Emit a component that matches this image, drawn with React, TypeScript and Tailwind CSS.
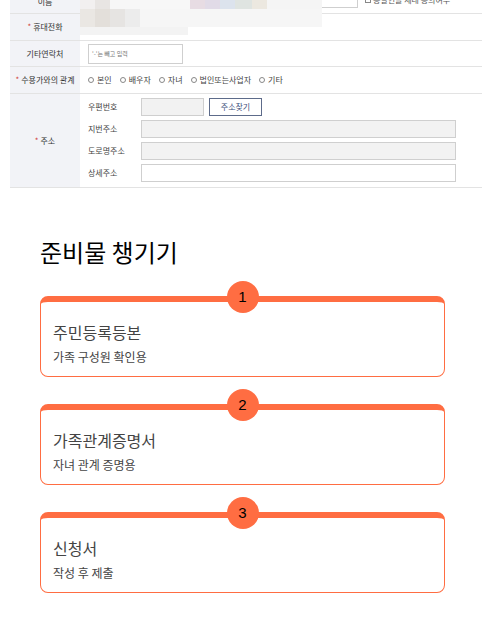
import React from 'react';

const mosaic: { top: number; h: number; cells: [number, number, string][] }[] = [
  {
    top: 0,
    h: 9,
    cells: [
      [80, 15, '#f2f0f0'], [95, 15, '#e8e5e3'], [110, 80, '#f7f7f7'], [190, 15, '#e7dce3'],
      [205, 15, '#e1dbe7'], [220, 15, '#dce3ed'], [235, 17, '#dfe4e1'], [252, 15, '#ece8e0'],
      [267, 55, '#f5f5f5'],
    ],
  },
  {
    top: 9,
    h: 18,
    cells: [
      [80, 15, '#eae7e3'], [95, 15, '#e3dfda'], [110, 15, '#e6e4e2'], [125, 15, '#ececec'],
      [140, 182, '#f6f6f6'],
    ],
  },
  { top: 27, h: 8, cells: [[80, 108, '#f3f3f3']] },
];

const Label = ({ req, children }: { req?: boolean; children: React.ReactNode }) => (
  <div className="w-[70px] shrink-0 self-stretch flex items-center justify-center bg-[#f2f3f7] text-[#333]">
    {req && <span className="text-[#d04040] mr-[2px]">*</span>}
    {children}
  </div>
);

const Radio = ({ label }: { label: string }) => (
  <span className="flex items-center gap-[3px]">
    <span className="w-[6px] h-[6px] rounded-full border border-[#888]" />
    {label}
  </span>
);

const steps = [
  { n: 1, title: '주민등록등본', desc: '가족 구성원 확인용' },
  { n: 2, title: '가족관계증명서', desc: '자녀 관계 증명용' },
  { n: 3, title: '신청서', desc: '작성 후 제출' },
];

export default function App() {
  return (
    <div className="w-[482px] h-[630px] overflow-hidden bg-white font-['Noto_Sans_CJK_KR','Noto_Sans',sans-serif]">
      <div className="relative ml-[10px] text-[8px] leading-none text-[#333]">
        {/* name row, scrolled partly out of view */}
        <div className="h-[14px] flex border-b border-[#e3e3e3] overflow-hidden">
          <Label>
            <span className="-mt-[10px]">이름</span>
          </Label>
          <div className="flex-1 flex items-end pb-[5px] pl-[8px]">
            <div className="ml-[200px] w-[70px] h-[16px] border border-[#cfcfcf] bg-white" />
            <span className="ml-[7px] mb-[4px] flex items-center gap-[2px] text-[#555]">
              <span className="w-[6px] h-[6px] border border-[#888]" />
              동일인을 세대 동의여부
            </span>
          </div>
        </div>
        <div className="h-[27px] flex border-b border-[#e3e3e3]">
          <Label req>휴대전화</Label>
          <div className="flex-1" />
        </div>
        <div className="h-[26px] flex border-b border-[#e3e3e3]">
          <Label>기타연락처</Label>
          <div className="flex-1 flex items-center pl-[8px]">
            <div className="w-[95px] h-[20px] border border-[#cfcfcf] flex items-center px-[3px] text-[6px] text-[#777]">
              '-'는 빼고 입력
            </div>
          </div>
        </div>
        <div className="h-[27px] flex border-b border-[#e3e3e3]">
          <Label req>수용가와의 관계</Label>
          <div className="flex-1 flex items-center gap-[8px] pl-[8px] text-[#444]">
            <Radio label="본인" />
            <Radio label="배우자" />
            <Radio label="자녀" />
            <Radio label="법인또는사업자" />
            <Radio label="기타" />
          </div>
        </div>
        <div className="h-[94px] flex border-b border-[#e3e3e3]">
          <Label req>주소</Label>
          <div className="flex-1 flex flex-col gap-[4px] pt-[4px] pl-[8px] text-[#444]">
            <div className="flex items-center h-[18px]">
              <span className="w-[53px]">우편번호</span>
              <div className="w-[63px] h-[18px] border border-[#cfcfcf] bg-[#f2f2f2]" />
              <div className="ml-[5px] w-[53px] h-[18px] border border-[#5d6b8a] flex items-center justify-center text-[#3d4f7a]">
                주소찾기
              </div>
            </div>
            <div className="flex items-center h-[18px]">
              <span className="w-[53px]">지번주소</span>
              <div className="w-[315px] h-[18px] border border-[#cfcfcf] bg-[#f2f2f2]" />
            </div>
            <div className="flex items-center h-[18px]">
              <span className="w-[53px]">도로명주소</span>
              <div className="w-[315px] h-[18px] border border-[#cfcfcf] bg-[#f2f2f2]" />
            </div>
            <div className="flex items-center h-[18px]">
              <span className="w-[53px]">상세주소</span>
              <div className="w-[315px] h-[18px] border border-[#cfcfcf] bg-white" />
            </div>
          </div>
        </div>

        {/* blurred personal info */}
        {mosaic.map((band, i) =>
          band.cells.map(([x, w, c], j) => (
            <div
              key={`${i}-${j}`}
              className="absolute"
              style={{ left: x - 10, top: band.top, width: w, height: band.h, background: c }}
            />
          ))
        )}
      </div>

      <section className="pl-[40px] pr-[37px]">
        <h2 className="mt-[48px] text-[24px] leading-[32px] font-normal text-black">준비물 챙기기</h2>
        <div className="mt-[28px] flex flex-col gap-[27px]">
          {steps.map((s) => (
            <div
              key={s.n}
              className="relative h-[81px] rounded-[8px] border border-t-[6px] border-[#ff6d42] px-[12px] pt-[18px] pb-[11px]"
            >
              <div className="absolute left-1/2 -translate-x-1/2 -top-[21px] w-[32px] h-[32px] rounded-full bg-[#ff6d42] flex items-center justify-center text-[15px] text-black font-['Liberation_Sans',sans-serif]">
                {s.n}
              </div>
              <div className="text-[16px] leading-[24px] text-[#444]">{s.title}</div>
              <div className="mt-[4px] text-[12px] leading-[18px] text-[#444]">{s.desc}</div>
            </div>
          ))}
        </div>
      </section>
    </div>
  );
}
